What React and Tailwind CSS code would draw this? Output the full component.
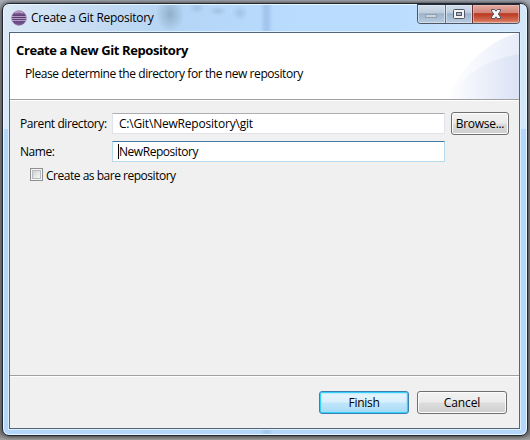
import React from 'react';

function EclipseIcon() {
  return (
    <svg className="h-4 w-4 shrink-0" viewBox="0 0 16 16">
      <defs>
        <linearGradient id="ball" x1="0" y1="0" x2="0" y2="1">
          <stop offset="0" stopColor="#a887b4" />
          <stop offset=".4" stopColor="#563270" />
          <stop offset="1" stopColor="#755a91" />
        </linearGradient>
      </defs>
      <circle cx="8" cy="8" r="7.3" fill="url(#ball)" stroke="#8e72a2" strokeWidth=".7" />
      <path d="M1 6.5h14M.8 8.5h14.4M1.2 10.5h13.6" stroke="#d5c4df" strokeWidth=".7" />
      <path d="M4 2.5Q8 .7 12 3" stroke="#c9b4d2" strokeWidth="1" fill="none" />
    </svg>
  );
}

function CaptionButtons() {
  return (
    <div className="-mt-px flex h-[20px] w-[103px] overflow-hidden rounded-b-[4px] border border-[#4c5664] border-t-[#222b36]">
      <div className="flex w-[28px] items-center justify-center border-r border-[#657485] bg-[linear-gradient(#d5dfec_0%,#bdcddf_44%,#9eb3ca_48%,#b7cbe0_100%)] shadow-[inset_0_0_0_1px_#dfe9f5b0]">
        <svg className="mt-[5px] h-[5px] w-[13px]" viewBox="0 0 13 5">
          <rect x=".5" y=".5" width="11" height="3" fill="#cbd5e0" stroke="#929fae" />
        </svg>
      </div>
      <div className="flex w-[27px] items-center justify-center border-r border-[#6e3034] bg-[linear-gradient(#d5dfec_0%,#bdcddf_44%,#9eb3ca_48%,#b7cbe0_100%)] shadow-[inset_0_0_0_1px_#dfe9f5b0]">
        <svg className="h-[10px] w-[12px]" viewBox="0 0 12 10">
          <rect x=".5" y=".5" width="11" height="9" rx="1" fill="#f4f4f5" stroke="#515568" />
          <rect x="3.5" y="3.5" width="5" height="3" fill="#a8b9cd" stroke="#515568" />
        </svg>
      </div>
      <div className="flex flex-1 items-center justify-center bg-[linear-gradient(#e2aba2_0%,#d28476_44%,#b93722_48%,#d16a50_85%,#e59a80_100%)] shadow-[inset_0_0_0_1px_#f0c0b5a0]">
        <svg className="h-[10px] w-[12px]" viewBox="0 0 12 10">
          <path d="M1.5.5h3L6 2.2 7.500.5h3v1.500L8.300 5l2.200 3v1.500h-3L6 7.800 4.500 9.500h-3V8l2.200-3-2.200-3z" fill="#f6f6f7" stroke="#515568" strokeWidth="1" />
        </svg>
      </div>
    </div>
  );
}

function TitleBar() {
  return (
    <div className="flex h-[27px] shrink-0 items-start justify-between pl-[7px] pr-[6px]">
      <div className="flex items-center gap-[4px] pt-[5px]">
        <EclipseIcon />
        <span className="leading-4 tracking-[-0.27px]">Create a Git Repository</span>
      </div>
      <CaptionButtons />
    </div>
  );
}

function Header() {
  return (
    <header className="flex h-[67px] shrink-0 justify-between border-b border-[#a0a0a0] bg-white">
      <div className="pl-[6px] pt-[9px]">
        <h1 className="whitespace-nowrap text-[13px] font-bold leading-4 tracking-[-0.4px]">Create a New Git Repository</h1>
        <p className="mt-[8px] whitespace-nowrap pl-[9px] leading-4 tracking-[-0.42px]">Please determine the directory for the new repository</p>
      </div>
      <svg className="h-[66px] w-[75px] shrink-0" viewBox="0 0 75 66">
        <defs>
          <linearGradient id="outer" x1="0" x2="1">
            <stop offset="0" stopColor="#fff" />
            <stop offset="1" stopColor="#e9eefa" />
          </linearGradient>
          <linearGradient id="middle" x1="0" x2="1">
            <stop offset="0" stopColor="#f6f8fd" />
            <stop offset="1" stopColor="#e7ecf9" />
          </linearGradient>
          <linearGradient id="inner" x1="0" x2="1">
            <stop offset="0" stopColor="#fff" />
            <stop offset=".4" stopColor="#f0f3fb" />
            <stop offset="1" stopColor="#dae2f5" />
          </linearGradient>
        </defs>
        <path d="M3 66C15 37 43 7 75 0v66z" fill="url(#outer)" />
        <path d="M32 46C43 22 56 6 75 0v66H32z" fill="url(#middle)" />
        <path d="M3 66C18 43 43 26 75 21v45z" fill="url(#inner)" />
      </svg>
    </header>
  );
}

const plainButton =
  'flex h-[23px] items-center justify-center rounded-[3px] border border-[#707070] bg-[linear-gradient(#f2f2f2_0%,#ebebeb_48%,#dddddd_52%,#cfcfcf_100%)] shadow-[inset_0_0_0_1px_#fcfcfc]';

function Form() {
  return (
    <main className="flex flex-1 flex-col border-t border-white pt-[11px]">
      <div className="flex h-[23px] items-center pl-[10px]">
        <label className="w-[92px] whitespace-nowrap tracking-[-0.41px]">Parent directory:</label>
        <div className="flex h-[21px] w-[333px] items-center rounded-[1px] border border-[#e2e3ea] border-t-[#abadb3] bg-white pl-[6px] tracking-[-0.2px]">C:\Git\NewRepository\git</div>
        <button className={plainButton + ' ml-[6px] w-[58px] tracking-[-0.3px]'}>Browse...</button>
      </div>
      <div className="mt-[6px] flex h-[21px] items-center pl-[10px]">
        <label className="w-[92px] pt-px tracking-[-0.45px]">Name:</label>
        <div className="flex h-[21px] w-[333px] items-center rounded-[1px] border border-[#b7d9ed] border-t-[#3d7bad] bg-white pl-[5px] tracking-[-0.46px]">
          <span className="h-[15px] w-px bg-black" />
          <span className="pt-px">NewRepository</span>
        </div>
      </div>
      <div className="mt-[6px] flex h-4 items-center pl-[20px]">
        <span className="mb-[3px] h-[13px] w-[13px] border border-[#8e8f8f] bg-[#f4f4f4] p-px">
          <span className="block h-full w-full border border-[#b8bcc0] bg-gradient-to-br from-[#cfd3d8] to-[#f6f6f6]" />
        </span>
        <span className="ml-[3px] tracking-[-0.48px]">Create as bare repository</span>
      </div>
    </main>
  );
}

function Footer() {
  return (
    <footer className="flex h-[53px] shrink-0 justify-end gap-[8px] border-t border-[#a0a0a0] pr-[12px] pt-[15px] shadow-[inset_0_1px_0_#fff]">
      <button className="flex h-[23px] w-[90px] items-center justify-center rounded-[3px] border border-[#3c7fb1] bg-[linear-gradient(#e9f6fd_0%,#d8effc_48%,#bfe6fb_52%,#a9daf5_100%)] tracking-[-0.3px] shadow-[inset_0_0_0_1px_#35d0fb,inset_0_0_1px_2px_#8be3fb80]">Finish</button>
      <button className={plainButton + ' w-[90px] tracking-[-0.1px]'}>Cancel</button>
    </footer>
  );
}

export default function App() {
  return (
    <div className="h-[440px] w-[530px] overflow-hidden bg-[linear-gradient(#aaaeb9_0px,#97999f_12px,#8c8c8c_130px,#8c8c8c_400px,#858585_434px,#a1a1a1_440px)] pl-[2px] pt-[3px] font-['Open_Sans','Noto_Sans',sans-serif] text-[12px] leading-4 text-black">
      <div className="h-[433px] w-[526px] rounded-[7px] border border-[#222831] bg-[radial-gradient(ellipse_14px_18px_at_168px_11px,#8fafc9_0%,transparent_100%),radial-gradient(ellipse_8px_8px_at_238px_10px,#91b2d188_0%,transparent_100%),radial-gradient(ellipse_8px_6px_at_195px_5px,#91b2d188_0%,transparent_100%),radial-gradient(ellipse_9px_5px_at_216px_8px,#91b2d188_0%,transparent_100%),linear-gradient(90deg,transparent_258px,#a3c6ee_263px,#a3c6ee_266px,transparent_271px),linear-gradient(#ffffff00_0px,#ffffff00_126px,#b4d6fa_126px),linear-gradient(90deg,#dce8f5_0px,#c0d9f2_110px,#b4d5f6_180px,#b9dcff_300px,#b9dcff_390px,#d5e7f9_526px)] bg-origin-border p-[1px] shadow-[inset_0_0_0_1px_#e8f6ff,0_0_5px_#222]">
        <div className="flex h-full w-full flex-col">
          <TitleBar />
          <div className="ml-[5px] mr-[6px] flex h-[397px] flex-col border border-[#53657a] bg-[#f0f0f0] shadow-[0_0_0_1px_#dceffc]">
            <Header />
            <Form />
            <Footer />
          </div>
        </div>
      </div>
    </div>
  );
}
